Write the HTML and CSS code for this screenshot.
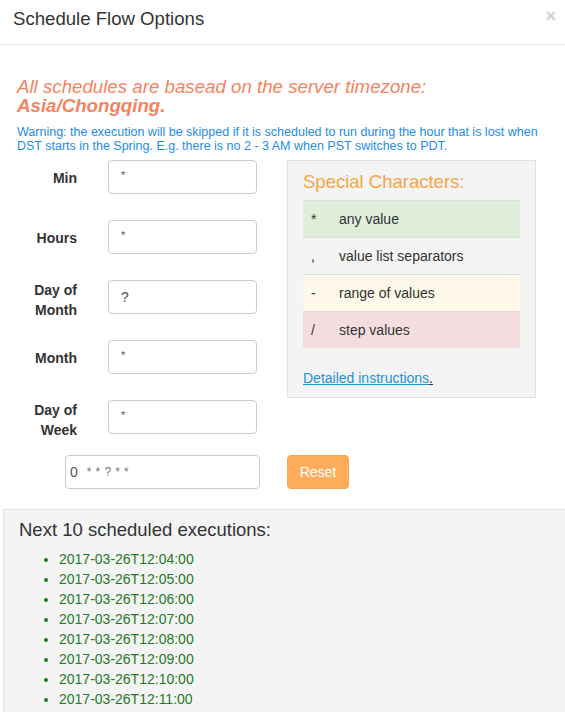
FILE: index.html
```html
<!DOCTYPE html>
<html>
<head>
<meta charset="utf-8">
<link rel="stylesheet" href="styles.css">
</head>
<body>
<div class="modal">
  <div class="header">
    <h4 class="title">Schedule Flow Options</h4>
    <span class="close">×</span>
  </div>
  <div class="body">
    <p class="tz">All schedules are basead on the server timezone: <b>Asia/Chongqing.</b></p>
    <p class="warn">Warning: the execution will be skipped if it is scheduled to run during the hour that is lost when DST starts in the Spring. E.g. there is no 2 - 3 AM when PST switches to PDT.</p>
    <div class="main">
      <div class="fields">
        <div class="row"><label class="lbl">Min</label><div class="input small">*</div></div>
        <div class="row"><label class="lbl">Hours</label><div class="input small">*</div></div>
        <div class="row"><label class="lbl two">Day of Month</label><div class="input">?</div></div>
        <div class="row"><label class="lbl">Month</label><div class="input small">*</div></div>
        <div class="row"><label class="lbl two">Day of Week</label><div class="input small">*</div></div>
      </div>
      <div class="special">
        <h4 class="sp-title">Special Characters:</h4>
        <table class="sp-table">
          <tr class="ok"><td class="ch">*</td><td>any value</td></tr>
          <tr><td class="ch">,</td><td>value list separators</td></tr>
          <tr class="warnrow"><td class="ch">-</td><td>range of values</td></tr>
          <tr class="bad"><td class="ch">/</td><td>step values</td></tr>
        </table>
        <p class="instr"><a class="link">Detailed instructions</a>.</p>
      </div>
    </div>
    <div class="cronrow">
      <div class="input cron">0<span class="stars">* * ? * *</span></div>
      <button class="reset">Reset</button>
    </div>
  </div>
  <div class="next">
    <h4 class="next-title">Next 10 scheduled executions:</h4>
    <ul class="list">
      <li>2017-03-26T12:04:00</li>
      <li>2017-03-26T12:05:00</li>
      <li>2017-03-26T12:06:00</li>
      <li>2017-03-26T12:07:00</li>
      <li>2017-03-26T12:08:00</li>
      <li>2017-03-26T12:09:00</li>
      <li>2017-03-26T12:10:00</li>
      <li>2017-03-26T12:11:00</li>
    </ul>
  </div>
</div>
</body>
</html>
```
FILE: styles.css
```css
html, body {
  margin: 0;
  padding: 0;
  background: #fff;
  font-family: "Liberation Sans", Arial, sans-serif;
  color: #333;
  overflow: hidden;
}
.modal {
  width: 565px;
  height: 712px;
  overflow: hidden;
}
.header {
  height: 45px;
  border-bottom: 1px solid #e5e5e5;
  display: flex;
  align-items: center;
  justify-content: space-between;
  padding: 0 9px 0 13px;
  box-sizing: border-box;
}
.title {
  margin: 0 0 7px 0;
  font-size: 18.6px;
  font-weight: normal;
  color: #333;
}
.close {
  font-size: 18px;
  font-weight: bold;
  color: #d0d0d0;
  margin-bottom: 12px;
}
.body {
  padding: 32px 0 0 17px;
}
.tz {
  margin: 0;
  font-size: 18.7px;
  line-height: 19px;
  font-style: italic;
  color: #f6825f;
  width: 480px;
}
.tz b {
  font-weight: bold;
}
.warn {
  margin: 10px 0 0 0;
  font-size: 12.5px;
  line-height: 14px;
  color: #1e8ce8;
  width: 535px;
}
.main {
  display: flex;
  align-items: flex-start;
  margin-top: 7px;
}
.fields {
  display: flex;
  flex-direction: column;
  gap: 26px;
  width: 240px;
}
.row {
  display: flex;
  align-items: center;
  gap: 31px;
  height: 34px;
}
.lbl {
  width: 60px;
  text-align: right;
  font-weight: bold;
  font-size: 14px;
  line-height: 20px;
  color: #333;
  padding-top: 2px;
}
.lbl.two {
  padding-top: 6px;
}
.input {
  box-sizing: border-box;
  width: 149px;
  height: 34px;
  border: 1px solid #ccc;
  border-radius: 4px;
  padding: 0 12px;
  display: flex;
  align-items: center;
  font-size: 14px;
  color: #555;
}
.input.small {
  font-size: 11px;
  padding-bottom: 4px;
}
.special {
  margin-left: 30px;
  width: 249px;
  height: 238px;
  box-sizing: border-box;
  background: #f4f4f4;
  border: 1px solid #e0e0e0;
  padding: 0 15px;
}
.sp-title {
  margin: 11px 0 0 0;
  font-size: 18.5px;
  font-weight: normal;
  color: #f9a43f;
  line-height: 20px;
}
.sp-table {
  margin-top: 8px;
  width: 217px;
  border-collapse: collapse;
  font-size: 14px;
  color: #333;
}
.sp-table td {
  height: 36px;
  border-top: 1px solid #dcdcdc;
  padding: 0;
}
.sp-table td.ch {
  width: 28px;
  padding-left: 8px;
  font-size: 14px;
}
.ok td { background: #dfeedb; }
.warnrow td { background: #fdf8e7; }
.bad td { background: #f2dede; }
.instr {
  margin: 22px 0 0 0;
  font-size: 14px;
  color: #333;
  text-decoration: underline;
}
.link {
  color: #1a93d8;
  text-decoration: underline;
}
.cronrow {
  display: flex;
  align-items: center;
  gap: 27px;
  margin-top: 21px;
  padding-left: 48px;
}
.input.cron {
  width: 195px;
  padding: 0 4px;
  font-size: 14px;
}
.stars {
  font-size: 12px;
  letter-spacing: 0.4px;
  margin-left: 9px;
  color: #777;
}
.reset {
  width: 62px;
  height: 34px;
  background: #ffad5c;
  border: 1px solid #f7a651;
  border-radius: 4px;
  color: #fff;
  font-family: "Liberation Sans", Arial, sans-serif;
  font-size: 14px;
  padding: 0;
}
.next {
  margin: 20px 0 0 3px;
  background: #f4f4f4;
  border-top: 1px solid #e3e3e3;
  border-left: 1px solid #e3e3e3;
  padding: 10px 0 0 15px;
  height: 400px;
}
.next-title {
  margin: 0;
  font-size: 18.5px;
  line-height: 20px;
  font-weight: normal;
  color: #333;
}
.list {
  margin: 9px 0 0 0;
  padding-left: 40px;
  font-size: 14px;
  line-height: 20px;
  color: #1f7a24;
}
```
